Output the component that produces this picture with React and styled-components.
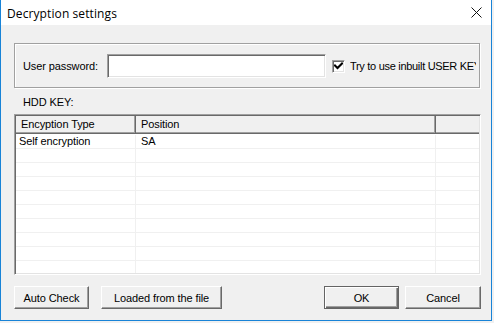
import React from 'react'
import styled, { createGlobalStyle } from 'styled-components'

const GlobalStyle = createGlobalStyle`
  html, body {
    margin: 0;
    padding: 0;
    background: #f0f0f0;
  }
  body {
    font-family: "Liberation Sans", Arial, sans-serif;
    font-size: 11px;
    letter-spacing: -0.1px;
    color: #000;
  }
`

const rows = [
  { type: 'Self encryption', position: 'SA' },
  {}, {}, {}, {}, {}, {}, {}, {}, {},
]

function CheckMark() {
  return (
    <svg width="9" height="9" viewBox="0 0 9 9">
      <path d="M1 3.5 L3.5 6 L8 1.5" fill="none" stroke="#000" strokeWidth="2" strokeLinecap="square" />
    </svg>
  )
}

function CloseIcon() {
  return (
    <svg width="11" height="11" viewBox="0 0 11 11">
      <path d="M0.5 0.5 L10.5 10.5 M10.5 0.5 L0.5 10.5" stroke="#111" strokeWidth="1" />
    </svg>
  )
}

function App() {
  return (
    <>
      <GlobalStyle />
      <Window>
        <TitleBar>
          <Title>Decryption settings</Title>
          <CloseIcon />
        </TitleBar>
        <Body>
          <Group>
            <FieldLabel>User password:</FieldLabel>
            <TextBox type='password' />
            <Check>
              <CheckBox>
                <CheckMark />
              </CheckBox>
              <CheckText>Try to use inbuilt USER KEY</CheckText>
            </Check>
          </Group>
          <SectionLabel>HDD KEY:</SectionLabel>
          <Table>
            <HeaderRow>
              <HeadCell w={120}>Encyption Type</HeadCell>
              <HeadCell w={300}>Position</HeadCell>
              <HeadCell last />
            </HeaderRow>
            <TableBody>
              {rows.map((row, i) => (
                <Row key={i}>
                  <Cell w={120} first>{row.type}</Cell>
                  <Cell w={300}>{row.position}</Cell>
                  <Cell />
                </Row>
              ))}
            </TableBody>
          </Table>
          <ButtonRow>
            <ButtonGroup>
              <Button w={75}>Auto Check</Button>
              <Button w={121}>Loaded from the file</Button>
            </ButtonGroup>
            <ButtonGroup small>
              <Button w={75} primary>OK</Button>
              <Button w={76}>Cancel</Button>
            </ButtonGroup>
          </ButtonRow>
        </Body>
      </Window>
    </>
  )
}

export default App

const Window = styled.div`
  width: 492px;
  height: 321px;
  box-sizing: border-box;
  border: 1px solid #1883d7;
  border-top: none;
  background: #f0f0f0;
  display: flex;
  flex-direction: column;
`

const TitleBar = styled.div`
  height: 25px;
  background: #fff;
  display: flex;
  align-items: center;
  justify-content: space-between;
  padding: 0 9px 0 6px;
  flex-shrink: 0;
`

const Title = styled.span`
  font-family: "Open Sans", "Liberation Sans", sans-serif;
  font-size: 12px;
  letter-spacing: 0.1px;
  color: #000;
  margin-top: 1px;
`

const Body = styled.div`
  display: flex;
  flex-direction: column;
  padding: 18px 10px 0 13px;
`

const Group = styled.div`
  height: 45px;
  box-sizing: border-box;
  margin-right: 1px;
  border: 1px solid #a0a0a0;
  box-shadow: inset 1px 1px 0 #fff, 1px 1px 0 #fff;
  display: flex;
  align-items: center;
  padding: 1px 3px 0 8px;
`

const FieldLabel = styled.label`
  width: 84px;
  flex-shrink: 0;
  white-space: nowrap;
`

const TextBox = styled.input`
  width: 219px;
  height: 24px;
  box-sizing: border-box;
  border: 1px solid;
  border-color: #a0a0a0 #fff #fff #a0a0a0;
  box-shadow: inset 1px 1px 0 #696969, inset -1px -1px 0 #e3e3e3;
  background: #fff;
  outline: none;
  padding: 0 3px;
  flex-shrink: 0;
`

const Check = styled.label`
  display: flex;
  align-items: center;
  margin-left: 6px;
  min-width: 0;
  flex: 1;
  overflow: hidden;
`

const CheckBox = styled.span`
  width: 13px;
  height: 13px;
  box-sizing: border-box;
  border: 1px solid;
  border-color: #a0a0a0 #fff #fff #a0a0a0;
  box-shadow: inset 1px 1px 0 #696969, inset -1px -1px 0 #e3e3e3;
  background: #fff;
  display: flex;
  align-items: center;
  justify-content: center;
  flex-shrink: 0;
  margin-top: 1px;
`

const CheckText = styled.span`
  margin-left: 5px;
  letter-spacing: -0.3px;
  white-space: nowrap;
  overflow: hidden;
`

const SectionLabel = styled.div`
  height: 25px;
  display: flex;
  align-items: center;
  padding-left: 9px;
  margin-top: 1px;
`

const Table = styled.div`
  height: 161px;
  box-sizing: border-box;
  border: 1px solid;
  border-color: #a0a0a0 #fff #fff #a0a0a0;
  box-shadow: inset 1px 1px 0 #696969, inset -1px -1px 0 #e3e3e3;
  padding: 1px;
  display: flex;
  flex-direction: column;
  overflow: hidden;
`

const HeaderRow = styled.div`
  display: flex;
  height: 17px;
  flex-shrink: 0;
  background: #f0f0f0;
  border-bottom: 1px solid #696969;
  box-shadow: inset 0 -1px 0 #a0a0a0;
`

const HeadCell = styled.div`
  width: ${(p) => (p.w ? `${p.w}px` : 'auto')};
  flex: ${(p) => (p.last ? 1 : 'none')};
  box-sizing: border-box;
  padding: 2px 0 0 5px;
  border-right: ${(p) => (p.last ? 'none' : '1px solid #696969')};
  box-shadow: ${(p) => (p.last ? 'none' : 'inset -1px -1px 0 #a0a0a0')};
  white-space: nowrap;
`

const TableBody = styled.div`
  flex: 1;
  background: #fff;
  padding-top: 1px;
  overflow: hidden;
`

const Row = styled.div`
  display: flex;
  height: 14px;
  box-sizing: border-box;
  border-bottom: 1px solid #f0f0f0;
`

const Cell = styled.div`
  width: ${(p) => (p.w ? `${p.w}px` : 'auto')};
  flex: ${(p) => (p.w ? 'none' : 1)};
  box-sizing: border-box;
  padding-left: ${(p) => (p.first ? '3px' : '5px')};
  border-right: ${(p) => (p.w ? '1px solid #f0f0f0' : 'none')};
  line-height: 13px;
  white-space: nowrap;
`

const ButtonRow = styled.div`
  display: flex;
  justify-content: space-between;
  margin-top: 11px;
`

const ButtonGroup = styled.div`
  display: flex;
  gap: ${(p) => (p.small ? '6px' : '12px')};
`

const Button = styled.button`
  width: ${(p) => p.w}px;
  height: 23px;
  box-sizing: border-box;
  background: #f0f0f0;
  font-family: "Liberation Sans", Arial, sans-serif;
  font-size: 11px;
  letter-spacing: -0.1px;
  color: #000;
  padding: 0;
  border: 1px solid;
  border-color: ${(p) => (p.primary ? '#646464' : '#fff #696969 #696969 #fff')};
  box-shadow: ${(p) =>
    p.primary
      ? 'inset 1px 1px 0 #fff, inset -1px -1px 0 #696969, inset -2px -2px 0 #a0a0a0'
      : 'inset -1px -1px 0 #a0a0a0'};
  cursor: default;
`
